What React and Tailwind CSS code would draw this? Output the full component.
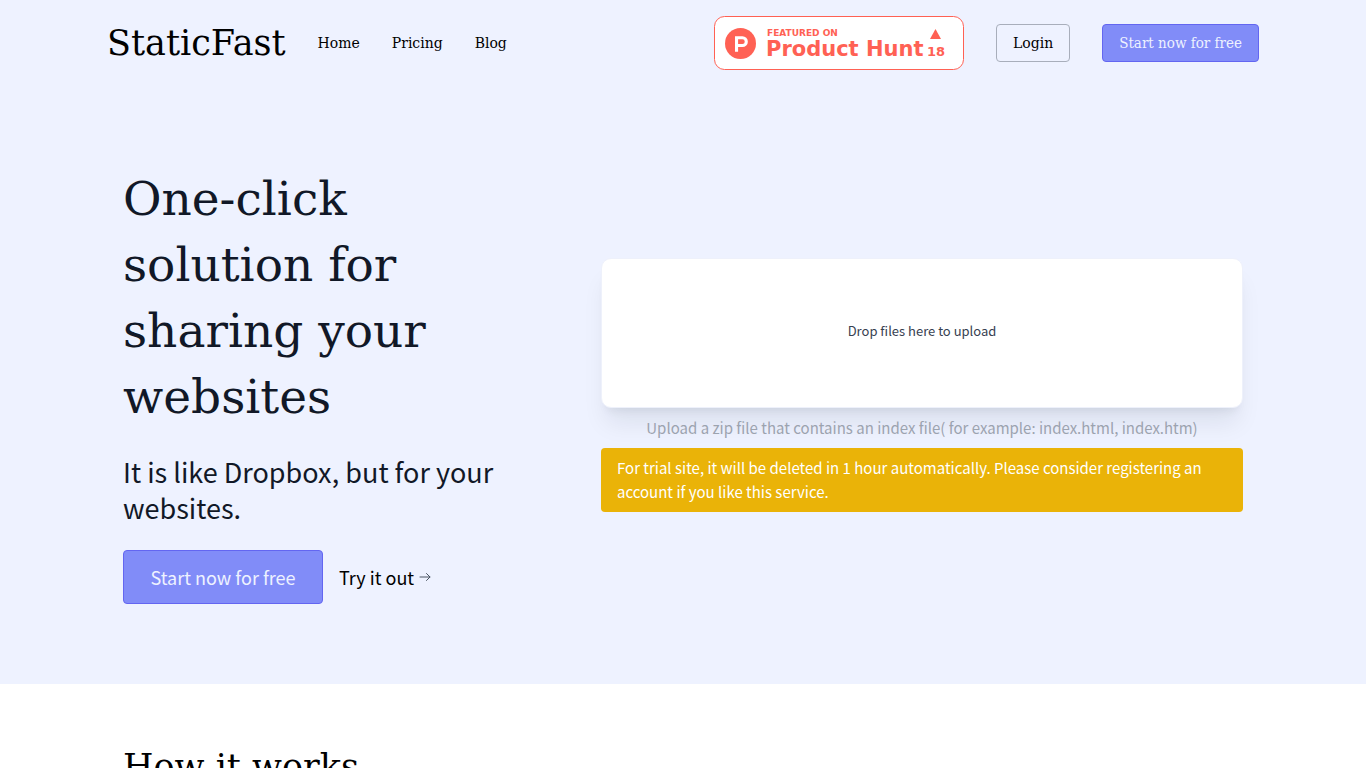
import React, { useState } from 'react';

const NAV_LINKS = [
  { label: 'Home', href: '#home' },
  { label: 'Pricing', href: '#pricing' },
  { label: 'Blog', href: '#blog' },
];

const ProductHuntBadge = () => (
  <a href="#product-hunt" aria-label="Featured on Product Hunt">
    <svg width="250" height="54" viewBox="0 0 250 54" className="block">
      <rect x="0.5" y="0.5" width="249" height="53" rx="10" fill="#fff" stroke="#FF6154" />
      <g transform="translate(11 12)">
        <circle cx="15.5" cy="15.5" r="15.5" fill="#FF6154" />
        <path
          fill="#fff"
          fillRule="evenodd"
          d="M9.99 8.2h7.44a5.425 5.425 0 0 1 0 10.85h-4.34v4.65h-3.1zM13.09 11.3v4.65h4.34a2.325 2.325 0 0 0 0-4.65z"
        />
      </g>
      <g fill="#FF6154" fontFamily="'DejaVu Sans', sans-serif" fontWeight="bold">
        <text x="53" y="20" fontSize="9">FEATURED ON</text>
        <text x="52" y="40" fontSize="21">Product Hunt</text>
        <text x="222" y="40" fontSize="13" textAnchor="middle">18</text>
      </g>
      <path d="M221.5 13L227 23H216z" fill="#FF6154" />
    </svg>
  </a>
);

const Header = () => (
  <header className="mx-auto flex max-w-6xl items-center justify-between py-4 font-['DejaVu_Serif',serif] text-sm text-black">
    <div className="flex items-center gap-8">
      <a href="#home" className="text-[35px] leading-10">StaticFast</a>
      <nav className="flex gap-8">
        {NAV_LINKS.map((link) => (
          <a key={link.label} href={link.href}>{link.label}</a>
        ))}
      </nav>
    </div>
    <div className="flex items-center gap-8">
      <ProductHuntBadge />
      <button className="rounded border border-[#a8aebb] px-4 py-2">Login</button>
      <button className="rounded border border-[#6366f1] bg-[#818cf8] px-4 py-2 font-['DejaVu_Serif_Condensed','DejaVu_Serif',serif] text-[15px] leading-5 text-[#eef2ff]">
        Start now for free
      </button>
    </div>
  </header>
);

const UploadPanel = () => {
  const [fileName, setFileName] = useState('');

  return (
    <div className="flex flex-col">
      <label
        htmlFor="site-zip"
        className="flex h-[150px] cursor-pointer items-center justify-center rounded-[10px] border border-[#eef1fb] bg-white pb-1 text-[13px] text-[#374151] shadow-xl shadow-slate-900/8"
      >
        {fileName || 'Drop files here to upload'}
      </label>
      <input
        id="site-zip"
        type="file"
        accept=".zip"
        className="hidden"
        onChange={(e) => setFileName(e.target.files[0]?.name || '')}
      />
      <p className="mt-2 text-center text-[15px] leading-6 text-[#9ca3af]">
        Upload a zip file that contains an index file( for example: index.html, index.htm)
      </p>
      <p className="mt-2 rounded bg-[#eab308] px-4 py-2 text-[15px] leading-6 text-white">
        For trial site, it will be deleted in 1 hour automatically. Please consider registering an
        account if you like this service.
      </p>
    </div>
  );
};

const Hero = () => (
  <section className="mx-auto grid max-w-6xl grid-cols-[414px_1fr] items-center gap-16 px-4 py-20">
    <div>
      <h1 className="font-['DejaVu_Serif',serif] text-[47px] leading-[66px] text-[#111827]">
        One-click solution for sharing your websites
      </h1>
      <p className="mt-6 text-[27px] leading-9 text-[#111827]">
        It is like Dropbox, but for your websites.
      </p>
      <div className="mt-6 flex items-center gap-4 text-lg leading-7">
        <button className="min-w-[200px] rounded border border-[#6366f1] bg-[#818cf8] px-6 py-3 text-[#eef2ff]">
          Start now for free
        </button>
        <a href="#try" className="flex items-center gap-1 text-black">
          Try it out
          <svg
            width="14"
            height="12"
            viewBox="0 0 14 12"
            fill="none"
            stroke="#4b5563"
            strokeLinecap="round"
            strokeLinejoin="round"
          >
            <path d="M2 6h10M8.5 2.5L12 6l-3.500 3.500" />
          </svg>
        </a>
      </div>
    </div>
    <UploadPanel />
  </section>
);

const App = () => (
  <div className="font-['Noto_Sans_CJK_SC',sans-serif]">
    <div className="bg-[#eef2ff]">
      <Header />
      <Hero />
    </div>
    <section className="mx-auto max-w-6xl px-4 py-14">
      <h2 className="font-['DejaVu_Serif',serif] text-[35px] leading-[54px] text-black">
        How it works
      </h2>
    </section>
  </div>
);

export default App;
